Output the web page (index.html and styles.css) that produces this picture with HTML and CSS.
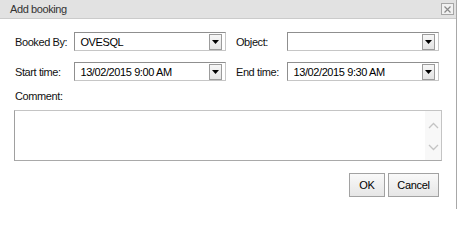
FILE: index.html
```html
<!DOCTYPE html>
<html>
<head>
<meta charset="utf-8">
<link rel="stylesheet" href="styles.css">
</head>
<body>
<div class="dialog">
  <div class="titlebar">
    <span class="title">Add booking</span>
    <span class="close"><svg width="9" height="9" viewBox="0 0 9 9"><path d="M1.5 1.5 L7.5 7.5 M7.5 1.5 L1.5 7.5" stroke="#8a8a8a" stroke-width="1.2" fill="none"/></svg></span>
  </div>
  <div class="content">
    <div class="row">
      <label class="lbl first">Booked By:</label>
      <div class="combo"><span class="val">OVESQL</span><span class="btn"><svg width="7" height="4" viewBox="0 0 7 4"><path d="M0 0 H7 L3.5 4 Z" fill="#000"/></svg></span></div>
      <label class="lbl second">Object:</label>
      <div class="combo"><span class="val"></span><span class="btn"><svg width="7" height="4" viewBox="0 0 7 4"><path d="M0 0 H7 L3.5 4 Z" fill="#000"/></svg></span></div>
    </div>
    <div class="row row2">
      <label class="lbl first">Start time:</label>
      <div class="combo"><span class="val">13/02/2015 9:00 AM</span><span class="btn"><svg width="7" height="4" viewBox="0 0 7 4"><path d="M0 0 H7 L3.5 4 Z" fill="#000"/></svg></span></div>
      <label class="lbl second">End time:</label>
      <div class="combo"><span class="val">13/02/2015 9:30 AM</span><span class="btn"><svg width="7" height="4" viewBox="0 0 7 4"><path d="M0 0 H7 L3.5 4 Z" fill="#000"/></svg></span></div>
    </div>
    <div class="comment-label">Comment:</div>
    <div class="comment-box">
      <textarea class="comment"></textarea>
      <div class="scroll">
        <svg width="11" height="7" viewBox="0 0 11 7"><path d="M1 6 L5.5 1.5 L10 6" stroke="#c4c4c4" stroke-width="1.3" fill="none"/></svg>
        <svg width="11" height="7" viewBox="0 0 11 7"><path d="M1 1 L5.5 5.5 L10 1" stroke="#c4c4c4" stroke-width="1.3" fill="none"/></svg>
      </div>
    </div>
    <div class="actions">
      <button class="button ok">OK</button>
      <button class="button cancel">Cancel</button>
    </div>
  </div>
</div>
</body>
</html>
```

FILE: styles.css
```css
html, body {
  margin: 0;
  padding: 0;
  background: #ffffff;
}
body {
  font-family: "Liberation Sans", Arial, sans-serif;
  font-size: 11px;
  letter-spacing: -0.4px;
  color: #111;
  width: 459px;
  height: 209px;
  overflow: hidden;
}
.dialog {
  width: 456px;
  height: 209px;
  border-right: 1px solid #a8a8a8;
  background: #fff;
  display: flex;
  flex-direction: column;
}
.titlebar {
  height: 18px;
  background: #e2e2e2;
  border-bottom: 1px solid #cbcbcb;
  display: flex;
  align-items: center;
  justify-content: space-between;
  padding-left: 10px;
  padding-right: 2px;
}
.title {
  color: #333;
}
.close {
  width: 11px;
  height: 10px;
  border: 1px solid #a6a6a6;
  background: #f1f1f1;
  display: flex;
  align-items: center;
  justify-content: center;
}
.content {
  padding: 13px 17px 0 15px;
  display: flex;
  flex-direction: column;
}
.row {
  display: flex;
  align-items: center;
  height: 19px;
}
.row2 {
  margin-top: 11px;
}
.lbl {
  color: #111;
}
.lbl.first {
  width: 60px;
}
.lbl.second {
  width: 52px;
  margin-left: 10px;
}
.combo {
  width: 151px;
  height: 17px;
  border: 1px solid;
  border-color: #8f8f8f #c6c6c6 #c6c6c6 #8f8f8f;
  display: flex;
  align-items: center;
  justify-content: space-between;
  background: #fff;
}
.val {
  padding-left: 5px;
  color: #000;
}
.btn {
  width: 11px;
  height: 13px;
  margin-right: 3px;
  border: 1px solid #9c9c9c;
  background: linear-gradient(#f7f7f7, #e4e4e4);
  display: flex;
  align-items: center;
  justify-content: center;
  padding-top: 1px;
}
.comment-label {
  margin-top: 8px;
  height: 14px;
  line-height: 14px;
}
.comment-box {
  margin-top: 7px;
  margin-left: -1px;
  width: 426px;
  height: 49px;
  border: 1px solid;
  border-color: #c4c4c4 #c4c4c4 #a9a9a9 #a0a0a0;
  display: flex;
}
.comment {
  flex: 1;
  border: none;
  outline: none;
  resize: none;
  margin: 0;
  padding: 2px;
  font-family: inherit;
  font-size: 11px;
  background: #fff;
}
.scroll {
  width: 16px;
  background: #f8f8f8;
  display: flex;
  flex-direction: column;
  align-items: center;
  justify-content: space-between;
  padding: 11px 0 9px;
}
.actions {
  margin-top: 12px;
  display: flex;
  justify-content: flex-end;
  gap: 3px;
}
.button {
  height: 24px;
  border: 1px solid #a2a2a2;
  background: linear-gradient(#f9f9f9, #e6e6e6);
  font-family: "Liberation Sans", Arial, sans-serif;
  font-size: 11px;
  letter-spacing: -0.3px;
  color: #000;
  padding: 0;
  margin: 0;
}
.ok {
  width: 36px;
}
.cancel {
  width: 51px;
}
```
